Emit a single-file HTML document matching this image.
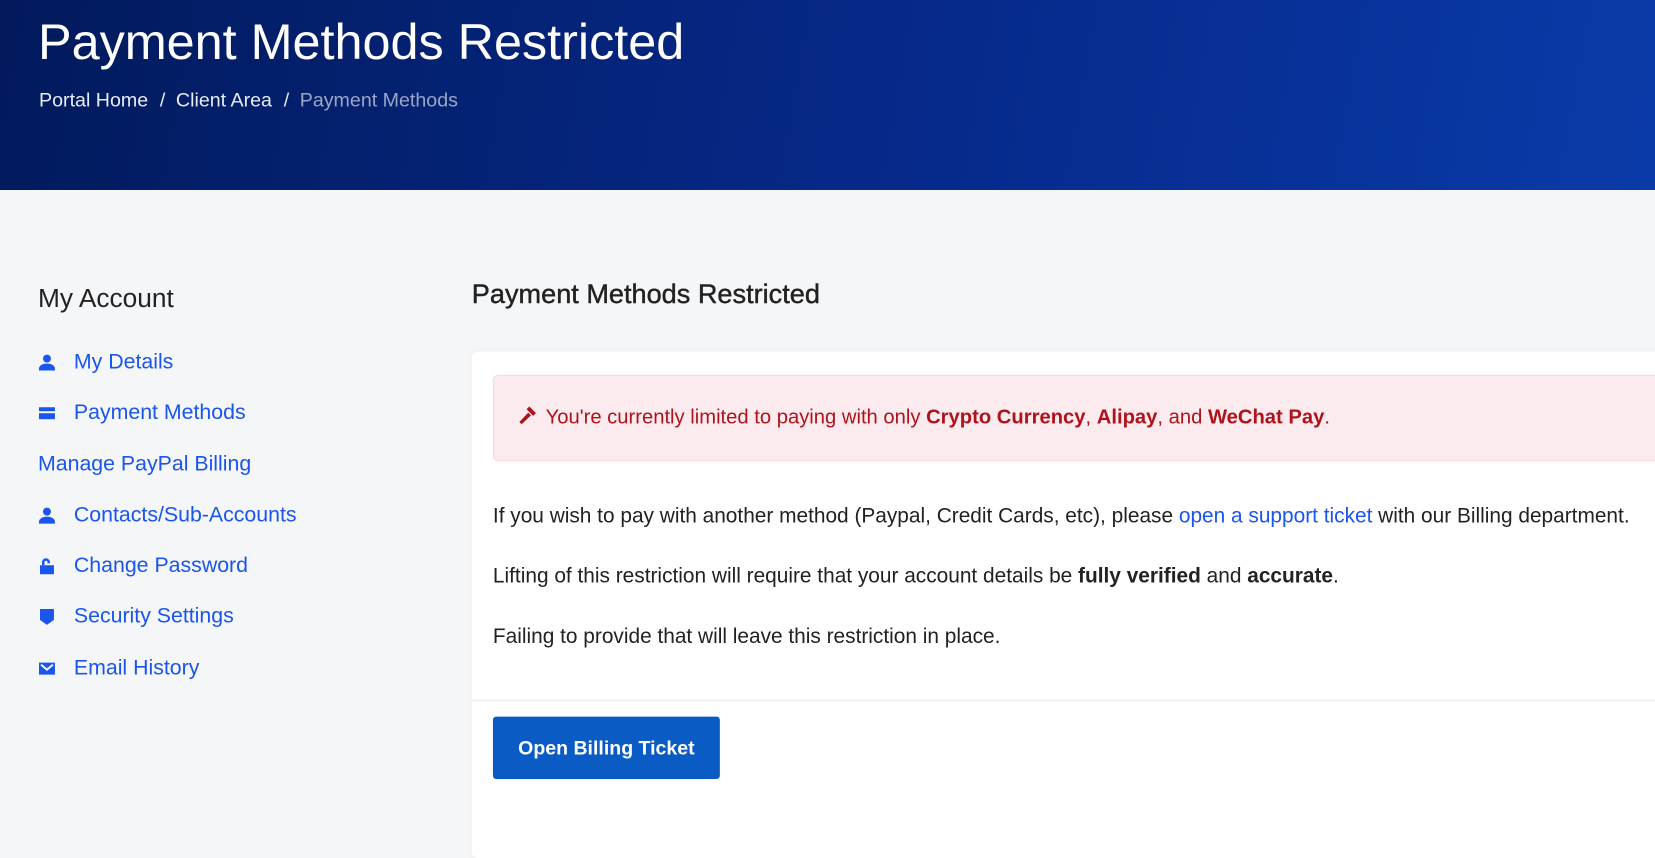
<!DOCTYPE html>
<html><head><meta charset="utf-8"><style>
*{margin:0;padding:0;box-sizing:border-box}
body{width:1655px;height:792px;overflow:hidden;background:#f5f6f8;font-family:"Liberation Sans",sans-serif;color:#222}
#w{position:absolute;left:0;top:0;width:1568px;height:751px;transform:scale(1.05549);transform-origin:0 0}
.hdr{position:absolute;left:0;top:0;width:1568px;height:180px;background:linear-gradient(100deg,#021a5c 0%,#06298a 55%,#0a3aa8 100%)}
.hdr h1{position:absolute;left:36px;top:11px;font-size:47.7px;line-height:60px;font-weight:400;color:#fff;white-space:nowrap}
.bc{position:absolute;left:37px;top:84px;font-size:18.6px;line-height:22px;color:#e8ecf5;white-space:nowrap}
.bc span.s{margin:0 10px 0 6px}
.bc .a{color:#9aa6c4}
.t{position:absolute;white-space:nowrap}
.side a{position:absolute;left:36px;display:flex;align-items:center;height:24px;font-size:20.2px;color:#1a55ee;text-decoration:none;white-space:nowrap}
.side a svg{width:17px;height:17px;margin-right:17px;fill:#1a55ee}
.card{position:absolute;left:447px;top:333px;width:1200px;height:480px;background:#fff;border-radius:6px;box-shadow:0 0 6px rgba(0,0,0,.04)}
.alert{position:absolute;left:20px;top:22px;width:1180px;height:82px;background:#fcebee;border:1px solid #f6d8dc;border-radius:5px;color:#b0121c;font-size:19.15px;line-height:24px;padding:28px 0 0 23px;white-space:nowrap}
.p{position:absolute;left:20px;font-size:19.76px;line-height:24px;color:#222;white-space:nowrap}
.p a{color:#1a55ee;text-decoration:none}
.hr{position:absolute;left:0;top:330px;width:100%;border-top:1px solid #e4e6ea}
.btn{position:absolute;left:20px;top:346px;width:215px;height:59px;background:#0a5bc4;color:#fff;border-radius:3px;font-size:18.5px;font-weight:bold;text-align:center;line-height:59px}
</style></head><body><div id="w">
<div class="hdr"><h1>Payment Methods Restricted</h1>
<div class="bc">Portal Home<span class="s">&nbsp;/</span>Client Area<span class="s">&nbsp;/</span><span class="a">Payment Methods</span></div></div>
<div class="t" style="left:36px;top:268px;font-size:24.9px;line-height:30px">My Account</div>
<div class="side">
<a style="top:331px"><svg viewBox="0 0 18 18"><circle cx="9" cy="5" r="4"/><path d="M1 17v-2c0-3 4-5 8-5s8 2 8 5v2z"/></svg>My Details</a>
<a style="top:379px"><svg viewBox="0 0 18 18"><rect x="1" y="3" width="16" height="4"/><rect x="1" y="9" width="16" height="6"/></svg>Payment Methods</a>
<a style="top:428px">Manage PayPal Billing</a>
<a style="top:476px"><svg viewBox="0 0 18 18"><circle cx="9" cy="5" r="4"/><path d="M1 17v-2c0-3 4-5 8-5s8 2 8 5v2z"/></svg>Contacts/Sub-Accounts</a>
<a style="top:524px"><svg viewBox="0 0 18 18"><path d="M2 8h14v9H2z"/><path d="M4 8V5a4 4 0 0 1 8 0v1h-2.5V5a1.5 1.5 0 0 0-3 0v3z"/></svg>Change Password</a>
<a style="top:572px"><svg viewBox="0 0 18 18"><path d="M2 1h14v11l-7 5-7-5z"/></svg>Security Settings</a>
<a style="top:621px"><svg viewBox="0 0 18 18"><path d="M1 3h16v12H1z"/><path d="M3 5l6 5 6-5" stroke="#f5f6f8" stroke-width="2" fill="none"/></svg>Email History</a>
</div>
<div class="t" style="left:447px;top:264px;font-size:25.7px;line-height:30px;color:#222;-webkit-text-stroke:0.4px #222">Payment Methods Restricted</div>
<div class="card">
<div class="alert"><svg width="21" height="19" viewBox="0 0 20 18" style="vertical-align:-2px;fill:#b0121c"><path d="M10 1l6 6-2.5 2.5-6-6z"/><path d="M9 6.5l2.5 2.5-8.5 8-2-2z"/></svg> You're currently limited to paying with only <b>Crypto Currency</b>, <b>Alipay</b>, and <b>WeChat Pay</b>.</div>
<div class="p" style="top:144px">If you wish to pay with another method (Paypal, Credit Cards, etc), please <a>open a support ticket</a> with our Billing department.</div>
<div class="p" style="top:201px">Lifting of this restriction will require that your account details be <b>fully verified</b> and <b>accurate</b>.</div>
<div class="p" style="top:258px">Failing to provide that will leave this restriction in place.</div>
<div class="hr"></div>
<div class="btn">Open Billing Ticket</div>
</div>
</div></body></html>
